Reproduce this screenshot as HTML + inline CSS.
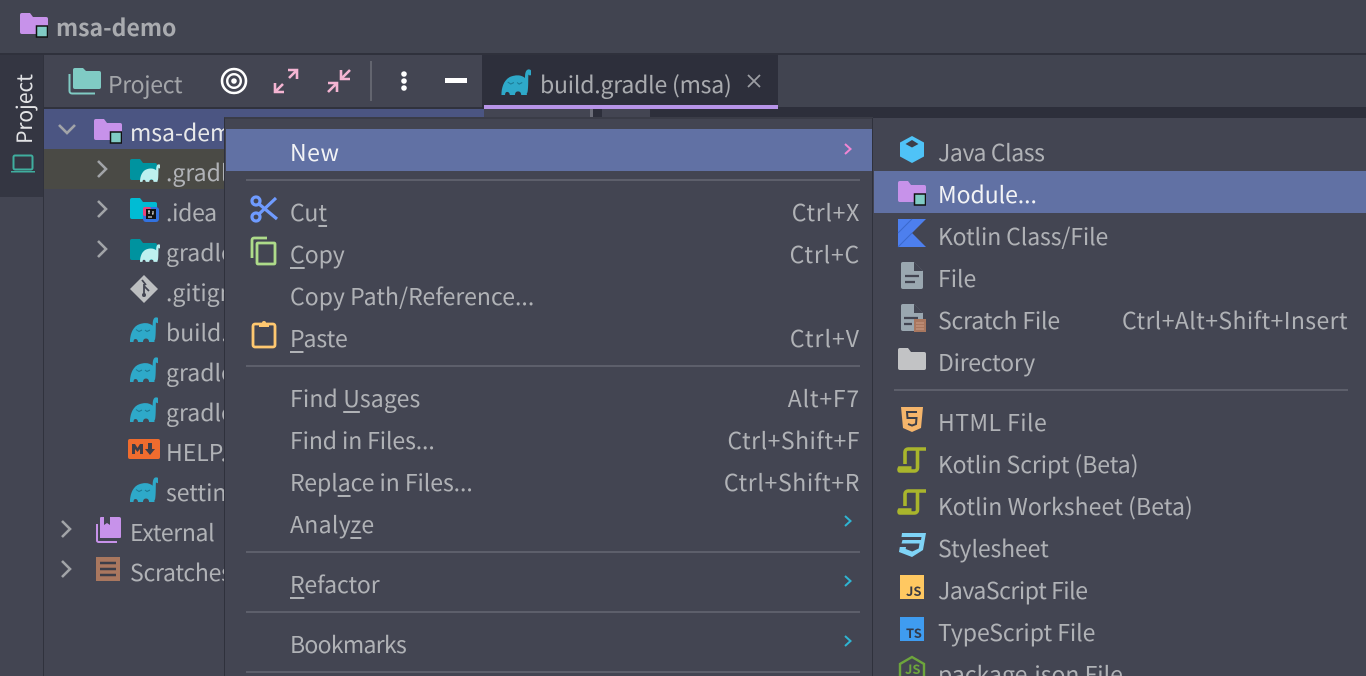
<!DOCTYPE html>
<html><head><meta charset="utf-8"><title>msa-demo</title>
<style>
*{box-sizing:border-box}
html,body{margin:0;padding:0;width:1366px;height:676px;overflow:hidden;background:#434552}
body{position:relative;font-family:"Noto Sans CJK KR","Liberation Sans",sans-serif;font-size:23px;color:#b4b6b8}
.a{position:absolute}
.t{position:absolute;white-space:nowrap;line-height:40px;height:40px;color:#b0b2b6;margin-top:-2px}
.r{text-align:right;letter-spacing:.5px}
u{text-decoration-thickness:2px;text-underline-offset:4px}
svg{position:absolute;overflow:visible}
.sep{position:absolute;height:2px;background:#5d5f6b}
</style></head><body>
<svg width="0" height="0" style="position:absolute"><defs>
<symbol id="el" viewBox="0 0 28 25"><path fill="#2ea9c9" d="M0 25C0 17 3 9 10 7 15 5.500 20 6 23 9L24.500 25H19C19 23 18 21.500 16 21.500 14 21.500 13 23 13 25H8C8 23.500 7 22 5.500 22 4 22 3.500 23.500 3.500 25z"/><path d="M23.500 22C25 14 23 2.500 26 2 27.500 1.800 27.700 3 27.500 4.500" fill="none" stroke="#2ea9c9" stroke-width="3.200" stroke-linecap="round"/><path d="M6 12.500l3 2 3-1.500M15 13l2 1.500 3-1.500" stroke="#1d7a94" stroke-width="1" fill="none"/></symbol>
<symbol id="elf" viewBox="0 0 28 25"><path fill="#bdf0ef" d="M0 25C0 17 3 9 10 7 15 5.500 20 6 23 9L24.500 25H19C19 23 18 21.500 16 21.500 14 21.500 13 23 13 25H8C8 23.500 7 22 5.500 22 4 22 3.500 23.500 3.500 25z"/><path d="M23.500 22C25 14 23 2.500 26 2 27.500 1.800 27.700 3 27.500 4.500" fill="none" stroke="#bdf0ef" stroke-width="3.200" stroke-linecap="round"/></symbol>
<symbol id="mod" viewBox="0 0 28 26"><path fill="#c792ea" d="M0 3a2 2 0 0 1 2-2h8l3 4h13a2 2 0 0 1 2 2v13a2 2 0 0 1-2 2H2a2 2 0 0 1-2-2z"/><rect x="16.500" y="14" width="11" height="11" fill="#80cbc4" stroke="#111" stroke-width="1.500"/></symbol>
<symbol id="chv" viewBox="0 0 12 20"><path d="M2 2l8 8-8 8" fill="none" stroke="#a2a4a8" stroke-width="2.600"/></symbol>
<symbol id="ks" viewBox="0 0 30 30"><path fill="none" stroke="#a9b52c" stroke-width="3.600" d="M29 3H11a3 3 0 0 0-3 3v12M20.500 3v19a3 3 0 0 1-3 3H3c-1 0-1.300-1.500-.5-3h12"/></symbol>
</defs></svg>

<!-- title bar -->
<div class="a" style="left:0;top:0;width:1366px;height:53px;background:#414450"></div>
<div class="a" style="left:0;top:53px;width:1366px;height:2px;background:#2f313c"></div>
<svg style="left:20px;top:12px" width="28" height="26"><use href="#mod"/></svg>
<div class="t" style="left:56px;top:8px;font-weight:700;color:#a9abaf;font-size:23px">msa-demo</div>

<!-- left stripe -->
<div class="a" style="left:0;top:55px;width:44px;height:621px;background:#434552"></div>
<div class="a" style="left:0;top:55px;width:43px;height:142px;background:#343642"></div>
<div class="a" style="left:43px;top:55px;width:1px;height:621px;background:#30323d"></div>
<div class="a" style="left:-16px;top:89px;width:80px;height:40px;line-height:40px;transform:rotate(-90deg);white-space:nowrap;color:#e2e3e5;font-size:21px;text-align:center">Project</div>
<svg style="left:10px;top:154px" width="26" height="20" viewBox="0 0 26 20"><rect x="3.500" y="1.500" width="19" height="14" rx="1.500" fill="none" stroke="#3fae9f" stroke-width="2"/><path d="M1 17h24v1.500H1z" fill="#3fae9f"/></svg>

<!-- project toolbar -->
<div class="a" style="left:44px;top:55px;width:440px;height:53px;background:#434552"></div>
<div class="a" style="left:44px;top:107px;width:440px;height:2px;background:#30323d"></div>
<svg style="left:68px;top:67px" width="33" height="28" viewBox="0 0 33 28"><path fill="#80cbc4" d="M5 3a2 2 0 0 1 2-2h8l3 3h13a2 2 0 0 1 2 2v14a2 2 0 0 1-2 2H7a2 2 0 0 1-2-2z"/><path fill="none" stroke="#80cbc4" stroke-width="2" d="M1.500 7v17a2.500 2.500 0 0 0 2.500 2.500h23"/></svg>
<div class="t" style="left:108px;top:65px;color:#a3a5a9;letter-spacing:-.3px">Project</div>
<svg style="left:220px;top:67px" width="28" height="28" viewBox="0 0 28 28"><circle cx="14" cy="14" r="12" fill="none" stroke="#fff" stroke-width="2.600"/><circle cx="14" cy="14" r="6.800" fill="none" stroke="#fff" stroke-width="2.400"/><circle cx="14" cy="14" r="2.800" fill="#fff"/></svg>
<svg style="left:273px;top:68px" width="26" height="26" viewBox="0 0 26 26"><path d="M15 2h9v9M24 2l-8 8M11 24H2v-9M2 24l8-8" fill="none" stroke="#f4b4d2" stroke-width="2.600"/></svg>
<svg style="left:326px;top:68px" width="26" height="26" viewBox="0 0 26 26"><path d="M15 2v9h9M15 11l9-9M11 24v-9H2M11 15l-9 9" fill="none" stroke="#f4b4d2" stroke-width="2.600"/></svg>
<div class="a" style="left:370px;top:61px;width:2px;height:40px;background:#63656f"></div>
<svg style="left:400px;top:70px" width="8" height="24"><circle cx="4" cy="4" r="2.800" fill="#fff"/><circle cx="4" cy="11" r="2.800" fill="#fff"/><circle cx="4" cy="18" r="2.800" fill="#fff"/></svg>
<div class="a" style="left:445px;top:78px;width:22px;height:5px;background:#fff"></div>

<!-- editor tabs -->
<div class="a" style="left:482px;top:55px;width:296px;height:54px;background:#2d2f3b"></div>
<div class="a" style="left:484px;top:105px;width:294px;height:4px;background:#b794e8"></div>
<div class="a" style="left:778px;top:55px;width:588px;height:52px;background:#414450"></div>
<div class="a" style="left:778px;top:107px;width:588px;height:11px;background:#2d2f3b"></div>
<div class="a" style="left:484px;top:109px;width:106px;height:8px;background:#434552"></div>
<div class="a" style="left:590px;top:109px;width:12px;height:8px;background:#2d2f3b"></div>
<div class="a" style="left:590px;top:109px;width:3px;height:8px;background:#6b6d78"></div>
<div class="a" style="left:602px;top:109px;width:48px;height:8px;background:#434552"></div>
<div class="a" style="left:650px;top:109px;width:128px;height:8px;background:#2d2f3b"></div>
<svg style="left:501px;top:69px" width="30" height="26"><use href="#el"/></svg>
<div class="t" style="left:540px;top:65px;color:#a9abaf;letter-spacing:-.2px">build.gradle (msa)</div>
<svg style="left:747px;top:74px" width="14" height="14" viewBox="0 0 14 14"><path d="M1 1l12 12M13 1L1 13" stroke="#9c9ea3" stroke-width="1.800"/></svg>

<!-- tree -->
<div class="a" style="left:44px;top:109px;width:440px;height:40px;background:#4b5582"></div>
<div class="a" style="left:44px;top:149px;width:440px;height:40px;background:#4a4a45"></div>
<svg style="left:57px;top:123px" width="20" height="12" viewBox="0 0 20 12"><path d="M2 2l8 8 8-8" fill="none" stroke="#a2a4a8" stroke-width="2.600"/></svg>
<svg style="left:94px;top:118px" width="28" height="26"><use href="#mod"/></svg>
<div class="t" style="left:130px;top:113px;color:#e8e9ea">msa-demo</div>

<svg style="left:96px;top:159px" width="12" height="20"><use href="#chv"/></svg>
<svg style="left:130px;top:158px" width="28" height="23" viewBox="0 0 28 23"><path fill="#00939f" d="M0 3a2 2 0 0 1 2-2h8l3 4h12a2 2 0 0 1 2 2v13a2 2 0 0 1-2 2H2a2 2 0 0 1-2-2z"/></svg>
<svg style="left:140px;top:164px" width="20" height="18"><use href="#elf"/></svg>
<div class="t" style="left:166px;top:153px">.gradle</div>

<svg style="left:96px;top:199px" width="12" height="20"><use href="#chv"/></svg>
<svg style="left:130px;top:197px" width="29" height="26" viewBox="0 0 29 26"><path fill="#00bcd4" d="M0 3a2 2 0 0 1 2-2h8l3 4h12a2 2 0 0 1 2 2v13a2 2 0 0 1-2 2H2a2 2 0 0 1-2-2z"/><rect x="13" y="10" width="16" height="15" rx="3" fill="#3272e0"/><rect x="13" y="10" width="8" height="9" rx="2" fill="#e8447a"/><rect x="16" y="12" width="10" height="10" fill="#111"/><path d="M18 14h2M19 14v3M23 14v3h-1M18 20h4" stroke="#fff" stroke-width="1"/></svg>
<div class="t" style="left:166px;top:193px;letter-spacing:-.3px">.idea</div>

<svg style="left:96px;top:239px" width="12" height="20"><use href="#chv"/></svg>
<svg style="left:130px;top:238px" width="28" height="23" viewBox="0 0 28 23"><path fill="#00939f" d="M0 3a2 2 0 0 1 2-2h8l3 4h12a2 2 0 0 1 2 2v13a2 2 0 0 1-2 2H2a2 2 0 0 1-2-2z"/></svg>
<svg style="left:140px;top:244px" width="20" height="18"><use href="#elf"/></svg>
<div class="t" style="left:166px;top:233px">gradle</div>

<svg style="left:130px;top:275px" width="28" height="28" viewBox="0 0 28 28"><path fill="#bdbfc1" d="M14 0l14 14-14 14L0 14z"/><path d="M12 5l4 5M14 9v11M14 11l5 5" stroke="#434552" stroke-width="1.800" fill="none"/><circle cx="14" cy="20" r="2" fill="#434552"/></svg>
<div class="t" style="left:166px;top:273px">.gitignore</div>

<svg style="left:130px;top:317px" width="28" height="25"><use href="#el"/></svg>
<div class="t" style="left:166px;top:313px">build.gradle</div>
<svg style="left:130px;top:357px" width="28" height="25"><use href="#el"/></svg>
<div class="t" style="left:166px;top:353px">gradlew</div>
<svg style="left:130px;top:397px" width="28" height="25"><use href="#el"/></svg>
<div class="t" style="left:166px;top:393px">gradlew.bat</div>
<svg style="left:128px;top:439px" width="32" height="20" viewBox="0 0 32 20"><rect width="32" height="20" rx="2" fill="#ef6c2e"/><path d="M4 15V5h3l2.500 4L12 5h3v10h-3v-5l-2.500 3L7 10v5z" fill="#3c3e49"/><path d="M20 4h4v6h3l-5 6-5-6h3z" fill="#3c3e49"/></svg>
<div class="t" style="left:166px;top:433px">HELP.md</div>
<svg style="left:130px;top:477px" width="28" height="25"><use href="#el"/></svg>
<div class="t" style="left:166px;top:473px">settings</div>

<svg style="left:60px;top:519px" width="12" height="20"><use href="#chv"/></svg>
<svg style="left:96px;top:516px" width="25" height="27" viewBox="0 0 25 27"><path fill="#c792ea" d="M4 2a1 1 0 0 1 1-1h3v8l3-2 3 2V1h9a2 2 0 0 1 2 2v18a1 1 0 0 1-1 1H4z"/><path d="M1 8v16.500a1.500 1.500 0 0 0 1.500 1.500H21" fill="none" stroke="#c792ea" stroke-width="2"/></svg>
<div class="t" style="left:130px;top:513px;letter-spacing:-.35px">External</div>
<svg style="left:60px;top:559px" width="12" height="20"><use href="#chv"/></svg>
<svg style="left:96px;top:556px" width="24" height="26" viewBox="0 0 24 26"><rect y="1" width="24" height="24" fill="#a9775f"/><path d="M4 7h16M4 13h16M4 19h16" stroke="#3c3e49" stroke-width="2.500"/></svg>
<div class="t" style="left:130px;top:553px;letter-spacing:-.25px">Scratches</div>

<!-- main popup -->
<div class="a" style="left:224px;top:117px;width:649px;height:559px;background:#434552;border-left:1px solid #2f313c;border-top:2px solid #3a3c47"></div>
<div class="a" style="left:226px;top:129px;width:646px;height:42px;background:#6171a4"></div>
<div class="t" style="left:290px;top:133px;color:#f2f3f5;letter-spacing:.5px">New</div>
<svg style="left:844px;top:143px" width="8" height="12" viewBox="0 0 8 12"><path d="M1 1l5.500 5L1 11" fill="none" stroke="#f286d4" stroke-width="2"/></svg>
<div class="sep" style="left:246px;top:179px;width:614px"></div>

<svg style="left:250px;top:195px" width="28" height="28" viewBox="0 0 28 28" fill="none" stroke="#6f9bff" stroke-width="3.200"><circle cx="6" cy="6" r="4"/><circle cx="6" cy="22" r="4"/><path d="M9 9l18 15M9 19L26 3"/></svg>
<div class="t" style="left:290px;top:193px">Cu<u>t</u></div>
<div class="t r" style="right:506px;top:193px;letter-spacing:.7px">Ctrl+X</div>
<svg style="left:250px;top:236px" width="27" height="30" viewBox="0 0 27 30" fill="none" stroke="#aedb8a" stroke-width="2.800"><rect x="7" y="7" width="18" height="21" rx="1"/><path d="M2 22V4a2 2 0 0 1 2-2h13"/></svg>
<div class="t" style="left:290px;top:235px"><u>C</u>opy</div>
<div class="t r" style="right:506px;top:235px;letter-spacing:.8px">Ctrl+C</div>
<div class="t" style="left:290px;top:277px;letter-spacing:.05px">Copy Path/Reference...</div>
<svg style="left:251px;top:319px" width="26" height="30" viewBox="0 0 26 30" fill="none" stroke="#ffc870" stroke-width="2.800"><rect x="2" y="5" width="22" height="23" rx="2"/><path d="M8 4h3a2 2 0 0 1 4 0h3v4H8z" fill="#ffc870" stroke="none"/></svg>
<div class="t" style="left:290px;top:319px"><u>P</u>aste</div>
<div class="t r" style="right:506px;top:319px;letter-spacing:1px">Ctrl+V</div>
<div class="sep" style="left:246px;top:365px;width:614px"></div>

<div class="t" style="left:290px;top:379px;letter-spacing:.15px">Find <u>U</u>sages</div>
<div class="t r" style="right:506px;top:379px;letter-spacing:.8px">Alt+F7</div>
<div class="t" style="left:290px;top:421px;letter-spacing:-.1px">Find in Files...</div>
<div class="t r" style="right:506px;top:421px">Ctrl+Shift+F</div>
<div class="t" style="left:290px;top:463px;letter-spacing:-.05px">Repl<u>a</u>ce in Files...</div>
<div class="t r" style="right:506px;top:463px;letter-spacing:.65px">Ctrl+Shift+R</div>
<div class="t" style="left:290px;top:505px;letter-spacing:.3px">Analy<u>z</u>e</div>
<svg style="left:844px;top:515px" width="8" height="12" viewBox="0 0 8 12"><path d="M1 1l5.500 5L1 11" fill="none" stroke="#2fb4d2" stroke-width="2"/></svg>
<div class="sep" style="left:246px;top:551px;width:614px"></div>
<div class="t" style="left:290px;top:565px"><u>R</u>efactor</div>
<svg style="left:844px;top:575px" width="8" height="12" viewBox="0 0 8 12"><path d="M1 1l5.500 5L1 11" fill="none" stroke="#2fb4d2" stroke-width="2"/></svg>
<div class="sep" style="left:246px;top:611px;width:614px"></div>
<div class="t" style="left:290px;top:625px;letter-spacing:-.7px">Bookmarks</div>
<svg style="left:844px;top:635px" width="8" height="12" viewBox="0 0 8 12"><path d="M1 1l5.500 5L1 11" fill="none" stroke="#2fb4d2" stroke-width="2"/></svg>
<div class="sep" style="left:246px;top:671px;width:614px"></div>

<!-- submenu -->
<div class="a" style="left:872px;top:118px;width:494px;height:558px;background:#434552;border-left:1px solid #2f313c"></div>
<div class="a" style="left:874px;top:171px;width:492px;height:42px;background:#6171a4"></div>

<svg style="left:900px;top:136px" width="24" height="27" viewBox="0 0 24 27"><path fill="#4fc3f7" d="M12 0l12 6.500v14L12 27 0 20.500v-14z"/><path fill="#3c3e49" d="M12 4l6.500 4L12 11.500 5.500 8z"/></svg>
<div class="t" style="left:938px;top:133px;letter-spacing:-.4px">Java Class</div>
<svg style="left:898px;top:180px" width="28" height="26"><use href="#mod"/></svg>
<div class="t" style="left:938px;top:175px;color:#f2f3f5;letter-spacing:-.05px">Module...</div>
<svg style="left:898px;top:219px" width="28" height="28" viewBox="0 0 28 28"><path fill="#4d7fee" d="M0 0h28L14 14l14 14H0z"/><path d="M0 14L14 0M0 28L14 14" stroke="#3a68cc" stroke-width="1"/></svg>
<div class="t" style="left:938px;top:217px;letter-spacing:-.1px">Kotlin Class/File</div>
<svg style="left:901px;top:262px" width="22" height="27" viewBox="0 0 22 27"><path fill="#9aa7b0" d="M2 0h11l9 9v16a2 2 0 0 1-2 2H2a2 2 0 0 1-2-2V2a2 2 0 0 1 2-2z"/><path d="M13 0v9h9" fill="#434552"/><path d="M4 14h14M4 20h10" stroke="#434552" stroke-width="2.200"/></svg>
<div class="t" style="left:938px;top:259px">File</div>
<svg style="left:901px;top:304px" width="26" height="28" viewBox="0 0 26 28"><path fill="#9aa7b0" d="M2 0h11l9 9v16a2 2 0 0 1-2 2H2a2 2 0 0 1-2-2V2a2 2 0 0 1 2-2z"/><path d="M13 0v9h9" fill="#434552"/><path d="M3 14h14M3 20h8" stroke="#434552" stroke-width="2.200"/><rect x="13" y="15" width="12" height="13" fill="#a9775f"/><path d="M15 19h8M15 22h8M15 25h8" stroke="#c4967f" stroke-width="1.200"/></svg>
<div class="t" style="left:938px;top:301px;letter-spacing:-.15px">Scratch File</div>
<div class="t r" style="right:18px;top:301px;letter-spacing:.4px">Ctrl+Alt+Shift+Insert</div>
<svg style="left:898px;top:348px" width="28" height="22" viewBox="0 0 28 22"><path fill="#c2c3c5" d="M0 2a2 2 0 0 1 2-2h8l3 4h13a2 2 0 0 1 2 2v14a2 2 0 0 1-2 2H2a2 2 0 0 1-2-2z"/></svg>
<div class="t" style="left:938px;top:343px;letter-spacing:-.2px">Directory</div>
<div class="sep" style="left:894px;top:389px;width:454px"></div>

<svg style="left:901px;top:407px" width="22" height="25" viewBox="0 0 22 25"><path fill="#f5b56b" d="M0 0h22l-2 21-9 4-9-4z"/><path d="M16 5H6l.5 6h9l-.5 6-4 1.500L7 17" fill="none" stroke="#3c3e49" stroke-width="2"/></svg>
<div class="t" style="left:938px;top:403px;letter-spacing:.45px">HTML File</div>
<svg style="left:897px;top:446px" width="30" height="30"><use href="#ks"/></svg>
<div class="t" style="left:938px;top:445px;letter-spacing:-.05px">Kotlin Script (Beta)</div>
<svg style="left:897px;top:488px" width="30" height="30"><use href="#ks"/></svg>
<div class="t" style="left:938px;top:487px;letter-spacing:.1px">Kotlin Worksheet (Beta)</div>
<svg style="left:899px;top:533px" width="27" height="25" viewBox="0 0 27 25"><path fill="#7fd4f7" d="M3 0h24l-3 17-11 7-13-5 .8-5H7l-.3 2 6.500 2.500 6.500-3 .8-5H2.500L3.500 7H22l.5-3H2.500z"/></svg>
<div class="t" style="left:938px;top:529px;letter-spacing:-.1px">Stylesheet</div>
<div class="a" style="left:900px;top:575px;width:24px;height:24px;background:#ffc861"></div>
<div class="a" style="left:906px;top:583px;color:#3a3b44;font-size:13px;font-weight:700;line-height:16px">JS</div>
<div class="t" style="left:938px;top:571px;letter-spacing:-.45px">JavaScript File</div>
<div class="a" style="left:900px;top:617px;width:24px;height:24px;background:#3f9cf0"></div>
<div class="a" style="left:906px;top:625px;color:#333a4a;font-size:13px;font-weight:700;line-height:16px">TS</div>
<div class="t" style="left:938px;top:613px;letter-spacing:-.05px">TypeScript File</div>
<svg style="left:898px;top:655px" width="28" height="32" viewBox="0 0 28 32"><path d="M14 2l12 7v14l-12 7-12-7V9z" fill="none" stroke="#6da53c" stroke-width="2.400"/></svg>
<div class="a" style="left:905px;top:661px;color:#6da53c;font-size:13px;font-weight:700;line-height:16px">JS</div>
<div class="t" style="left:938px;top:655px">package.json File</div>
</body></html>
